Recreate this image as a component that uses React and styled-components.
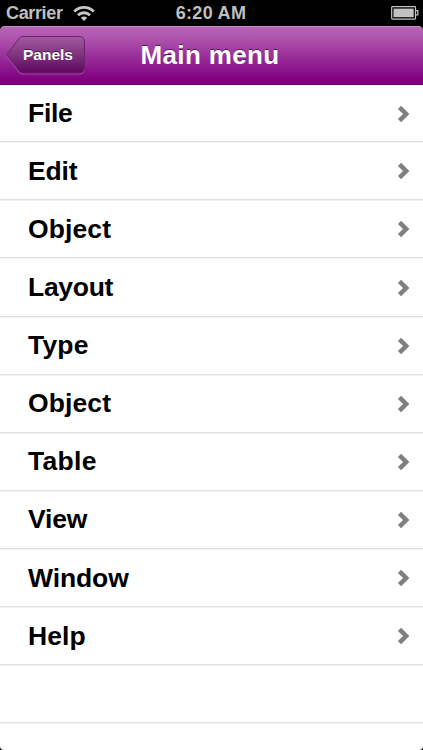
import React from "react";
import styled, { createGlobalStyle } from "styled-components";

const Global = createGlobalStyle`
  * { box-sizing: border-box; }
  body { margin: 0; background: #000; font-family: "Liberation Sans", Arial, sans-serif; }
`;

const Screen = styled.main`
  width: 423px;
  height: 750px;
  overflow: hidden;
  background: #000;
  display: flex;
  flex-direction: column;
`;

const StatusBar = styled.div`
  flex: none;
  height: 26px;
  padding: 0 4px 0 6px;
  display: grid;
  grid-template-columns: 1fr auto 1fr;
  align-items: center;
  color: #bfbfbf;
  font-weight: 700;
  font-size: 18px;
  line-height: 26px;
`;

const Carrier = styled.div`
  display: flex;
  align-items: center;
  gap: 10px;
  letter-spacing: -0.35px;
`;

const Clock = styled.span`
  margin-right: 3px;
  letter-spacing: 0.3px;
`;

const BatteryIcon = styled.svg`
  justify-self: end;
`;

const NavBar = styled.header`
  flex: none;
  height: 59px;
  padding: 0 6px;
  display: grid;
  grid-template-columns: 80px 1fr 80px;
  align-items: center;
  border-radius: 5px 5px 0 0;
  border-bottom: 1px solid #6d006d;
  background: linear-gradient(#b765b7, #af55af 20%, #800080 92%);
  box-shadow: inset 0 1px 0 #c48ac4;
`;

const BackButton = styled.button`
  width: 80px;
  height: 42px;
  margin-top: 2px;
  padding: 0;
  border: 0;
  background: none;
  display: grid;
  align-items: center;
  & > * { grid-area: 1 / 1; }
`;

const BackLabel = styled.span`
  z-index: 1;
  padding: 0 0 2px 4px;
  color: #fff;
  font: 700 15.5px "Liberation Sans", Arial, sans-serif;
  text-shadow: 0 -1px 0 rgba(0, 0, 0, 0.5);
`;

const Title = styled.h1`
  margin: 0;
  padding-right: 3px;
  text-align: center;
  color: #fff;
  font-size: 26px;
  line-height: 58px;
  letter-spacing: 0.35px;
  text-shadow: 0 -1px 0 rgba(0, 0, 0, 0.5);
`;

const Menu = styled.ul`
  list-style: none;
  margin: 0;
  padding: 0;
  flex: 1;
  overflow: hidden;
  background: #fff;
  border-radius: 0 0 4px 4px;
`;

const Row = styled.li`
  height: ${(p) => (p.$first ? 57.3 : 58.1)}px;
  padding: 1px 13px 0 28px;
  display: flex;
  align-items: center;
  justify-content: space-between;
  border-bottom: 1px solid #dfdfdf;
  box-shadow: 0 1px 0 #f2f2f2;
  font-weight: 700;
  font-size: 26.5px;
  letter-spacing: ${(p) => p.$tracking || 0}px;
  color: #000;
`;

const items = [
  { label: "File", tracking: -0.3 },
  { label: "Edit", tracking: -0.2 },
  { label: "Object", tracking: 0.1 },
  { label: "Layout", tracking: -0.3 },
  { label: "Type", tracking: 0.2 },
  { label: "Object", tracking: 0.1 },
  { label: "Table", tracking: 0.3 },
  { label: "View", tracking: -0.2 },
  { label: "Window", tracking: -0.1 },
  { label: "Help", tracking: 0.1 },
];

const Wifi = () => (
  <svg width="22" height="17" viewBox="0 0 22 17" fill="none" stroke="#c8c8c8" strokeWidth="2.8">
    <path d="M1.3 6.4C6.8 1 15.2 1 20.7 6.4" />
    <path d="M5 10.2C8.4 6.9 13.6 6.9 17 10.2" />
    <path d="M11 16 7.8 12.8C9.6 11.2 12.4 11.2 14.2 12.8Z" fill="#c8c8c8" stroke="none" />
  </svg>
);

const Battery = () => (
  <BatteryIcon width="29" height="14" viewBox="0 0 29 14">
    <rect x="1.7" y=".7" width="23.8" height="12.4" rx=".8" fill="none" stroke="#c6c6c6" strokeWidth="1.2" />
    <rect x="3.5" y="2.6" width="20.2" height="8.6" fill="#c2c2c2" />
    <path d="M25.8 4.7h2v4.2h-2" fill="none" stroke="#c6c6c6" strokeWidth="1.2" />
  </BatteryIcon>
);

const BackShape = () => (
  <svg width="80" height="42" viewBox="0 0 80 42">
    <defs>
      <linearGradient id="back" x1="0" y1="0" x2="0" y2="1">
        <stop offset="0" stopColor="#a35aa3" />
        <stop offset=".5" stopColor="#7d347d" />
        <stop offset="1" stopColor="#600560" />
      </linearGradient>
    </defs>
    <path d="M17 2.5H73Q78.500 2.500 78.500 8V33.500Q78.500 39 73 39H17Q14.500 39 13 37L1.500 22Q.8 20.800 1.500 19.600L13 4.500Q14.500 2.500 17 2.500Z" fill="none" stroke="#bd72bd" strokeOpacity=".7" />
    <path d="M17 1.500H73Q78.500 1.500 78.500 7V32.500Q78.500 38 73 38H17Q14.500 38 13 36L1.500 21Q.8 19.800 1.500 18.600L13 3.500Q14.500 1.500 17 1.500Z" fill="url(#back)" stroke="#692469" />
  </svg>
);

const Chevron = () => (
  <svg width="14" height="18" viewBox="0 0 14 18">
    <path d="M3.500 2.300 10.200 9 3.500 15.700" fill="none" stroke="#7f7f7f" strokeWidth="4.500" />
  </svg>
);

export default function App() {
  return (
    <>
      <Global />
      <Screen>
        <StatusBar>
          <Carrier>Carrier<Wifi /></Carrier>
          <Clock>6:20 AM</Clock>
          <Battery />
        </StatusBar>
        <NavBar>
          <BackButton>
            <BackShape />
            <BackLabel>Panels</BackLabel>
          </BackButton>
          <Title>Main menu</Title>
        </NavBar>
        <Menu>
          {items.map((item, i) => (
            <Row key={i} $first={i === 0} $tracking={item.tracking}>
              {item.label}
              <Chevron />
            </Row>
          ))}
          <Row />
        </Menu>
      </Screen>
    </>
  );
}
